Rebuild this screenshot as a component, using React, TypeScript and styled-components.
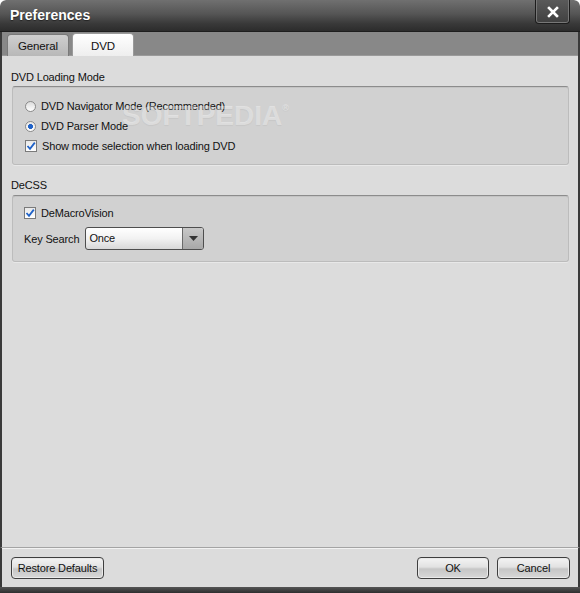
import React from 'react';
import styled, { createGlobalStyle } from 'styled-components';

const GlobalStyle = createGlobalStyle`
    html, body {
        margin: 0;
        padding: 0;
        background: #ffffff;
    }
    body {
        font-family: 'Liberation Sans', Arial, sans-serif;
        font-size: 11px;
        letter-spacing: -0.15px;
        color: #000;
    }
`;

export default function App() {
    return (
        <>
            <GlobalStyle />
            <Window>
                <TitleBar>
                    <Title>Preferences</Title>
                    <CloseButton aria-label="close">
                        <svg width="12" height="12" viewBox="0 0 12 12">
                            <path d="M2 2 L10 10 M10 2 L2 10" stroke="#fff" strokeWidth="2.6" strokeLinecap="square" />
                        </svg>
                    </CloseButton>
                </TitleBar>
                <TabStrip>
                    <Tab>General</Tab>
                    <Tab $active>DVD</Tab>
                </TabStrip>
                <Body>
                    <Section>
                        <SectionTitle>DVD Loading Mode</SectionTitle>
                        <Group>
                            <Option>
                                <Radio />
                                DVD Navigator Mode (Recommended)
                            </Option>
                            <Option>
                                <Radio $checked />
                                DVD Parser Mode
                            </Option>
                            <Option>
                                <Check />
                                Show mode selection when loading DVD
                            </Option>
                        </Group>
                    </Section>
                    <Section>
                        <SectionTitle>DeCSS</SectionTitle>
                        <Group $tight>
                            <Option>
                                <Check />
                                DeMacroVision
                            </Option>
                            <FieldRow>
                                <span>Key Search</span>
                                <Combo>
                                    <ComboValue>Once</ComboValue>
                                    <ComboArrow>
                                        <svg width="9" height="5" viewBox="0 0 9 5">
                                            <path d="M0 0 H9 L4.5 5 Z" fill="#333" />
                                        </svg>
                                    </ComboArrow>
                                </Combo>
                            </FieldRow>
                        </Group>
                    </Section>
                    <Watermark>SOFTPEDIA<sup>®</sup></Watermark>
                </Body>
                <Footer>
                    <Button $width={93}>Restore Defaults</Button>
                    <Spacer />
                    <Button $width={72}>OK</Button>
                    <Button $width={73}>Cancel</Button>
                </Footer>
                <BottomEdge />
            </Window>
        </>
    );
}

const Check = () => (
    <CheckBox>
        <svg width="10" height="10" viewBox="0 0 10 10">
            <path d="M1.5 5 L4 7.8 L8.8 1.6" fill="none" stroke="#1f62c8" strokeWidth="1.8" />
        </svg>
    </CheckBox>
);

const Window = styled.div`
    width: 580px;
    height: 593px;
    display: flex;
    flex-direction: column;
    background: #dcdcdc;
    border-radius: 6px 6px 0 0;
    overflow: hidden;
`;

const TitleBar = styled.div`
    height: 31px;
    flex: none;
    display: flex;
    align-items: flex-start;
    justify-content: space-between;
    padding: 0 10px 0 10px;
    background: linear-gradient(to bottom, #707070 0%, #555 45%, #3a3a3a 75%, #2c2c2c 100%);
    border-bottom: 1px solid #1e1e1e;
    border-radius: 6px 6px 0 0;
`;

const Title = styled.div`
    color: #fff;
    font-family: 'Liberation Sans', Arial, sans-serif;
    font-weight: bold;
    font-size: 14px;
    letter-spacing: 0;
    line-height: 31px;
    text-shadow: 0 1px 1px #222;
`;

const CloseButton = styled.div`
    width: 35px;
    height: 24px;
    box-sizing: border-box;
    display: flex;
    align-items: center;
    justify-content: center;
    border: 1px solid #1c1c1c;
    border-top: none;
    border-radius: 0 0 4px 4px;
    box-shadow: inset 1px 0 0 #777, inset -1px 0 0 #777, inset 0 -1px 0 #777;
    background: linear-gradient(to bottom, #5a5a5a, #404040);
`;

const TabStrip = styled.div`
    height: 24px;
    flex: none;
    display: flex;
    align-items: flex-end;
    gap: 3px;
    padding-left: 5px;
    background: #888888;
    border-left: 2px solid #3a3a3a;
    border-right: 2px solid #3a3a3a;
    box-shadow: inset 0 -1px 0 #9a9a9a;
`;

const Tab = styled.div<{ $active?: boolean }>`
    height: ${(p) => (p.$active ? 23 : 22)}px;
    width: 62px;
    display: flex;
    align-items: center;
    justify-content: center;
    box-sizing: border-box;
    border: 1px solid ${(p) => (p.$active ? '#9a9a9a' : '#7a7a7a')};
    border-bottom: none;
    border-radius: 4px 4px 0 0;
    color: #111;
    font-size: 11.5px;
    padding-top: 1px;
    background: ${(p) =>
        p.$active
            ? 'linear-gradient(to bottom, #ffffff 0%, #eeeeee 100%)'
            : 'linear-gradient(to bottom, #cfcfcf 0%, #b8b8b8 100%)'};
`;

const Body = styled.div`
    position: relative;
    flex: 1;
    display: flex;
    flex-direction: column;
    gap: 13px;
    padding: 14px 9px 0 9px;
    border-left: 2px solid #3a3a3a;
    border-right: 2px solid #3a3a3a;
`;

const Section = styled.div`
    display: flex;
    flex-direction: column;
    gap: 2px;
`;

const SectionTitle = styled.div`
    height: 14px;
    line-height: 14px;
    color: #111;
`;

const Group = styled.div<{ $tight?: boolean }>`
    display: flex;
    flex-direction: column;
    gap: ${(p) => (p.$tight ? 7 : 6)}px;
    padding: ${(p) => (p.$tight ? '10px 12px 11px 11px' : '12px 12px 11px 12px')};
    margin-top: ${(p) => (p.$tight ? 1 : 0)}px;
    margin-left: 1px;
    background: #d1d1d1;
    border: 1px solid #bcbcbc;
    border-top-color: #8c8c8c;
    border-radius: 3px;
    box-shadow: inset 0 1px 0 #c4c4c4, 0 1px 0 #e8e8e8;
`;

const Option = styled.div`
    height: 14px;
    display: flex;
    align-items: center;
    gap: 5px;
    color: #111;
    white-space: nowrap;
`;

const Radio = styled.span<{ $checked?: boolean }>`
    width: 11px;
    height: 11px;
    box-sizing: border-box;
    border-radius: 50%;
    border: 1px solid #8a8a8a;
    background: ${(p) =>
        p.$checked
            ? 'radial-gradient(circle, #1f62c8 0 2.2px, transparent 2.8px), linear-gradient(to bottom, #e6e6e6, #ffffff)'
            : 'linear-gradient(to bottom, #dcdcdc, #ffffff)'};
    flex: none;
`;

const CheckBox = styled.span`
    width: 12px;
    height: 12px;
    box-sizing: border-box;
    border: 1px solid #7a7a7a;
    background: linear-gradient(to bottom, #e8e8e8, #ffffff);
    display: flex;
    align-items: center;
    justify-content: center;
    flex: none;
`;

const FieldRow = styled.div`
    display: flex;
    align-items: center;
    gap: 6px;
    color: #111;
    white-space: nowrap;
`;

const Combo = styled.div`
    width: 119px;
    height: 23px;
    box-sizing: border-box;
    display: flex;
    border: 1px solid #4e4e4e;
    border-radius: 3px;
    overflow: hidden;
    background: linear-gradient(to bottom, #ffffff 0%, #f2f2f2 50%, #d8d8d8 100%);
`;

const ComboValue = styled.div`
    flex: 1;
    padding-left: 3px;
    line-height: 21px;
    color: #111;
`;

const ComboArrow = styled.div`
    width: 20px;
    display: flex;
    align-items: center;
    justify-content: center;
    border-left: 1px solid #6a6a6a;
    background: linear-gradient(to bottom, #c8c8c8 0%, #a8a8a8 100%);
`;

const Watermark = styled.div`
    position: absolute;
    left: 120px;
    top: 38px;
    font-family: 'Liberation Sans', Arial, sans-serif;
    font-weight: bold;
    font-size: 28px;
    line-height: 28px;
    letter-spacing: 0;
    color: rgba(255, 255, 255, 0.4);
    text-shadow: 0 1px 1px rgba(0, 0, 0, 0.05);
    pointer-events: none;
    sup {
        font-size: 9px;
        vertical-align: 14px;
    }
`;

const Footer = styled.div`
    height: 39px;
    flex: none;
    display: flex;
    align-items: center;
    gap: 8px;
    padding: 0 8px 0 9px;
    border-top: 1px solid #a4a4a4;
    box-shadow: inset 0 1px 0 #f2f2f2;
    border-left: 2px solid #3a3a3a;
    border-right: 2px solid #3a3a3a;
`;

const Spacer = styled.div`
    flex: 1;
`;

const Button = styled.div<{ $width: number }>`
    width: ${(p) => p.$width}px;
    height: 22px;
    box-sizing: border-box;
    display: flex;
    align-items: center;
    justify-content: center;
    white-space: nowrap;
    border: 1px solid #3f3f3f;
    border-radius: 4px;
    color: #111;
    background: linear-gradient(to bottom, #f4f4f4 0%, #e2e2e2 45%, #c6c6c6 55%, #d8d8d8 100%);
    box-shadow: inset 0 0 0 1px #eaeaea;
`;

const BottomEdge = styled.div`
    height: 6px;
    flex: none;
    background: linear-gradient(to bottom, #555 0%, #2e2e2e 100%);
`;
